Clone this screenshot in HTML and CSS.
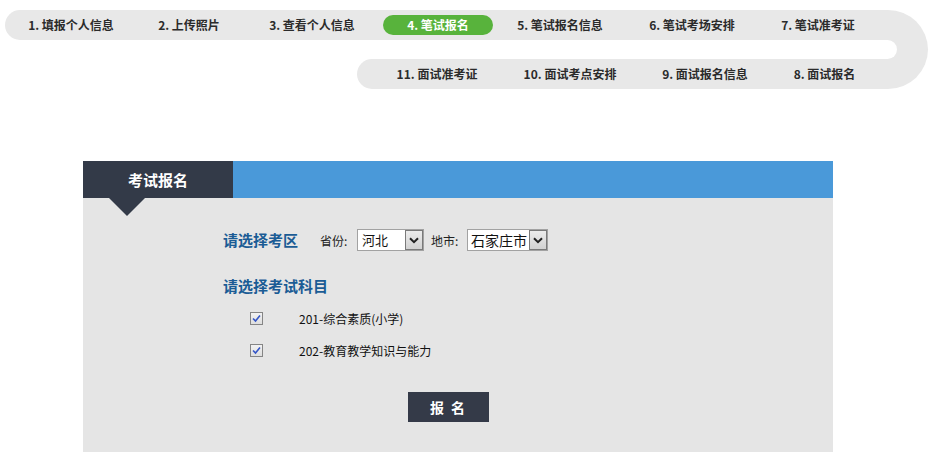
FILE: index.html
```html
<!DOCTYPE html>
<html lang="zh">
<head>
<meta charset="utf-8">
<title>考试报名</title>
<link rel="stylesheet" href="styles.css">
</head>
<body>
<div class="track">
  <div class="row row-top">
    <div class="step w1">1. 填报个人信息</div>
    <div class="step w2">2. 上传照片</div>
    <div class="step w3">3. 查看个人信息</div>
    <div class="step w4"><span class="pill">4. 笔试报名</span></div>
    <div class="step w5">5. 笔试报名信息</div>
    <div class="step w6">6. 笔试考场安排</div>
    <div class="step w7">7. 笔试准考证</div>
  </div>
  <div class="gap"></div>
  <div class="row row-bottom">
    <div class="step b1">11. 面试准考证</div>
    <div class="step b2">10. 面试考点安排</div>
    <div class="step b3">9. 面试报名信息</div>
    <div class="step b4">8. 面试报名</div>
  </div>
</div>

<div class="panel">
  <div class="panel-head">
    <div class="tab">考试报名</div>
  </div>
  <div class="panel-body">
    <div class="area-row">
      <span class="heading">请选择考区</span>
      <span class="label l1">省份:</span>
      <span class="select s1"><span class="select-text">河北</span><span class="select-btn"><svg width="10" height="7" viewBox="0 0 10 7"><path d="M1 1.2 L5 5.2 L9 1.2" fill="none" stroke="#222" stroke-width="2"/></svg></span></span>
      <span class="label l2">地市:</span>
      <span class="select s2"><span class="select-text">石家庄市</span><span class="select-btn"><svg width="10" height="7" viewBox="0 0 10 7"><path d="M1 1.2 L5 5.2 L9 1.2" fill="none" stroke="#222" stroke-width="2"/></svg></span></span>
    </div>
    <div class="heading subj">请选择考试科目</div>
    <div class="check-row first">
      <span class="checkbox"><svg width="9" height="9" viewBox="0 0 9 9"><path d="M1 4.5 L3.5 7 L8 1.5" fill="none" stroke="#3556c7" stroke-width="1.6"/></svg></span>
      <span class="check-label">201-综合素质(小学)</span>
    </div>
    <div class="check-row">
      <span class="checkbox"><svg width="9" height="9" viewBox="0 0 9 9"><path d="M1 4.5 L3.5 7 L8 1.5" fill="none" stroke="#3556c7" stroke-width="1.6"/></svg></span>
      <span class="check-label">202-教育教学知识与能力</span>
    </div>
    <div class="btn-row">
      <span class="btn">报 名</span>
    </div>
  </div>
</div>
</body>
</html>
```

FILE: styles.css
```css
html, body {
  margin: 0;
  padding: 0;
  background: #fff;
}
body {
  font-family: "Noto Sans CJK SC", "Liberation Sans", sans-serif;
  font-size: 12px;
  color: #222;
}

/* step track */
.track {
  position: relative;
  width: 923px;
  margin: 10px 0 0 5px;
}
.track::before {
  content: "";
  position: absolute;
  right: 0;
  top: 0;
  width: 80px;
  height: 79px;
  background: #e8e8e8;
  border-radius: 0 40px 40px 0 / 0 39.5px 39.5px 0;
}
.row {
  position: relative;
  display: flex;
  align-items: center;
  height: 30px;
  background: #e8e8e8;
  border-radius: 15px 0 0 15px;
  margin-right: 40px;
}
.row-bottom {
  margin-left: 352px;
}
.gap {
  position: relative;
  height: 19px;
  margin-left: 352px;
  margin-right: 31px;
  background: #fff;
  border-radius: 0 10px 10px 0;
}
.step {
  flex: none;
  text-align: center;
  font-weight: bold;
  font-size: 12px;
  line-height: 20px;
  color: #2b2b2b;
  white-space: nowrap;
}
.w1 { width: 132px; }
.w2 { width: 104px; }
.w3 { width: 142px; }
.w4 { width: 110px; }
.w5 { width: 134px; }
.w6 { width: 130px; }
.w7 { width: 122px; }
.b1 { width: 160px; }
.b2 { width: 106px; }
.b3 { width: 164px; }
.b4 { width: 75px; }
.pill {
  display: block;
  height: 20px;
  line-height: 20px;
  background: #58b33c;
  color: #fff;
  border-radius: 10px;
}

/* panel */
.panel {
  width: 750px;
  margin: 72px 0 0 83px;
}
.panel-head {
  display: flex;
  height: 37px;
  background: #4a99d9;
}
.tab {
  position: relative;
  width: 150px;
  background: #333a48;
  color: #fff;
  font-size: 15px;
  font-weight: bold;
  display: flex;
  align-items: center;
  justify-content: center;
}
.tab::after {
  content: "";
  position: absolute;
  left: 26px;
  top: 100%;
  width: 0;
  height: 0;
  border-left: 18px solid transparent;
  border-right: 18px solid transparent;
  border-top: 18px solid #333a48;
}
.panel-body {
  box-sizing: border-box;
  height: 254px;
  background: #e5e5e5;
  padding: 31px 0 0 140px;
}
.area-row {
  display: flex;
  align-items: center;
  height: 22px;
}
.heading {
  color: #1b5c95;
  font-size: 15px;
  font-weight: bold;
  line-height: 20px;
}
.area-row .heading {
  margin-right: 22px;
}
.label {
  font-size: 12px;
  color: #222;
}
.l1 { width: 37px; }
.l2 { width: 36px; margin-left: 7px; }
.select {
  box-sizing: border-box;
  display: flex;
  align-items: stretch;
  height: 22px;
  background: #fff;
  border: 1px solid #a2a2a2;
}
.s1 { width: 67px; }
.s2 { width: 81px; }
.select-text {
  flex: 1;
  font-size: 14px;
  line-height: 20px;
  padding-left: 3px;
  color: #111;
  white-space: nowrap;
  overflow: hidden;
}
.s1 .select-text { font-size: 13px; padding-left: 4px; }
.select-btn {
  box-sizing: border-box;
  width: 18px;
  border: 1px solid #7a7a7a;
  background: linear-gradient(#ececec, #d2d2d2);
  display: flex;
  align-items: center;
  justify-content: center;
}
.subj {
  margin-top: 25px;
}
.check-row {
  display: flex;
  align-items: center;
  height: 20px;
  margin-top: 12px;
  padding-left: 27px;
}
.check-row.first {
  margin-top: 12px;
}
.checkbox {
  box-sizing: border-box;
  width: 13px;
  height: 13px;
  border: 1px solid #858585;
  background: linear-gradient(#f2f2f2, #dedede);
  display: flex;
  align-items: center;
  justify-content: center;
}
.check-label {
  margin-left: 36px;
  font-size: 12px;
  color: #111;
}
.btn-row {
  margin-top: 32px;
  padding-left: 185px;
}
.btn {
  display: block;
  width: 81px;
  height: 30px;
  line-height: 30px;
  text-align: center;
  background: #343a48;
  color: #fff;
  font-size: 14px;
  font-weight: bold;
  letter-spacing: 2px;
}
```
